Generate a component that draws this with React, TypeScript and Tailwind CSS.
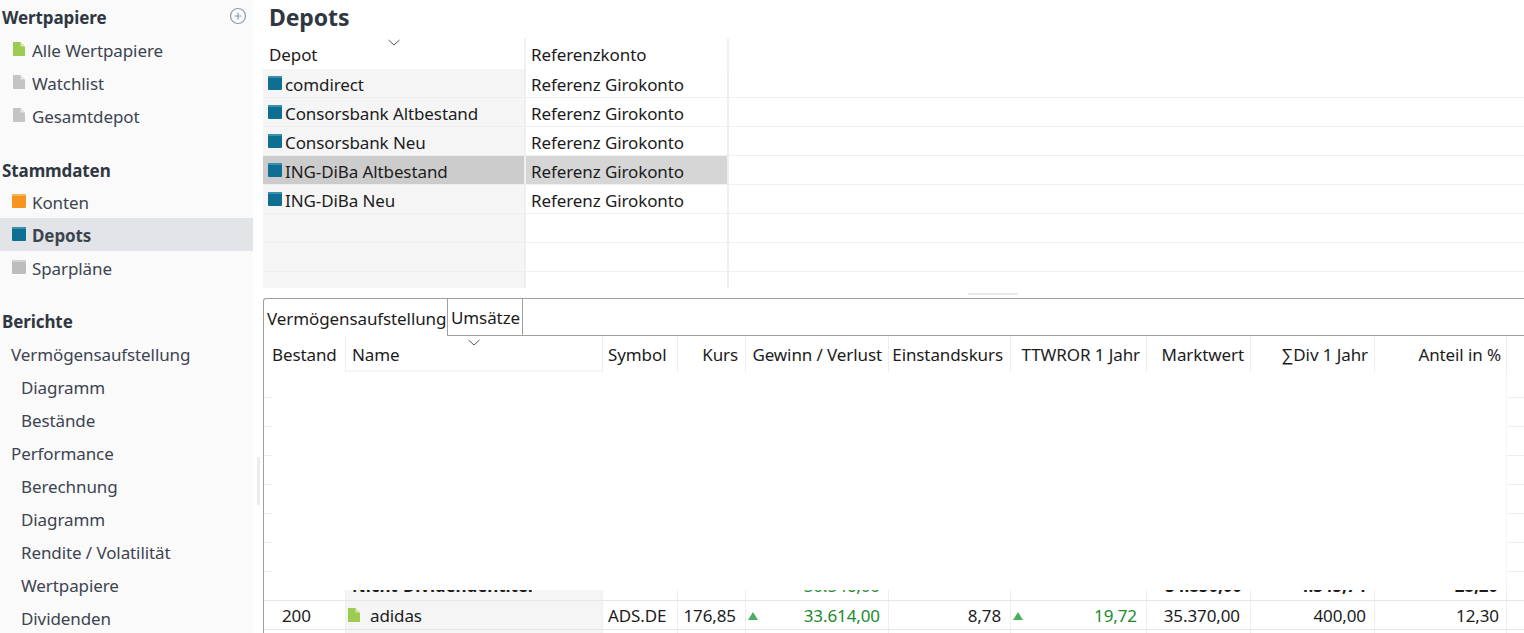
import React from 'react';
import { CirclePlus } from 'lucide-react';

const FONT = "font-['Noto_Sans',sans-serif] tracking-[-0.1px]";

function DocIcon({ color }: { color: string }) {
  return (
    <svg width="12" height="14" viewBox="0 0 12 14" className="shrink-0">
      <path d="M0 0H7.5L12 4.5V14H0Z" fill={color} />
      <path d="M7.5 0L12 4.5H7.5Z" fill="#ffffff" fillOpacity="0.55" />
    </svg>
  );
}

function BoxIcon({ color, light }: { color: string; light: string }) {
  return (
    <svg width="14" height="14" viewBox="0 0 14 14" className="shrink-0">
      <rect width="14" height="14" rx="1" fill={color} />
      <rect width="14" height="2" rx="1" fill={light} />
    </svg>
  );
}

function SortChevron() {
  return (
    <svg width="14" height="7" viewBox="0 0 14 7" fill="none" stroke="#555" strokeWidth="1">
      <path d="M1.5 1L7 6L12.5 1" />
    </svg>
  );
}

function Heading({ label, plus, flat }: { label: string; plus?: boolean; flat?: boolean }) {
  return (
    <div className={`flex h-[33px] items-center justify-between pl-[2px] pr-[6px] text-[17px] font-bold text-[#2f3742] ${flat ? 'pb-[2px]' : 'pt-[4px]'}`}>
      <span>{label}</span>
      {plus && <CirclePlus size={18} strokeWidth={1.6} className="mb-[3px] text-[#8f9ba6]" />}
    </div>
  );
}

type NavItemProps = { label: string; icon?: React.ReactNode; indent?: string; active?: boolean; flat?: boolean };

function NavItem({ label, icon, indent, active, flat }: NavItemProps) {
  return (
    <div
      className={`flex h-[33px] items-center text-[17px] text-[#3c4450] ${indent ?? 'pl-[12px]'} ${flat ? 'pb-[2px]' : 'pt-[4px]'} ${active ? 'bg-[#e3e4e8] font-bold text-[#2f3742]' : ''}`}
    >
      {icon && <span className={`flex ${flat ? 'w-[19px] pb-[3px]' : 'w-[20px] pb-[5px]'}`}>{icon}</span>}
      <span>{label}</span>
    </div>
  );
}

function Sidebar() {
  return (
    <aside className="flex w-[253px] shrink-0 flex-col bg-[#fafafa] pt-[2px]">
      <Heading label="Wertpapiere" plus flat />
      <NavItem label="Alle Wertpapiere" flat indent="pl-[13px]" icon={<DocIcon color="#9ccb4f" />} />
      <NavItem label="Watchlist" flat indent="pl-[13px]" icon={<DocIcon color="#c4c4c4" />} />
      <NavItem label="Gesamtdepot" flat indent="pl-[13px]" icon={<DocIcon color="#c4c4c4" />} />
      <div className="h-[18px]" />
      <Heading label="Stammdaten" />
      <NavItem label="Konten" icon={<BoxIcon color="#f7941d" light="#fbb45c" />} />
      <NavItem label="Depots" active icon={<BoxIcon color="#0e6f93" light="#3d8fae" />} />
      <NavItem label="Sparpläne" icon={<BoxIcon color="#bdbdbd" light="#d2d2d2" />} />
      <div className="h-[20px]" />
      <Heading label="Berichte" />
      <NavItem label="Vermögensaufstellung" indent="pl-[11px]" />
      <NavItem label="Diagramm" indent="pl-[21px]" />
      <NavItem label="Bestände" indent="pl-[21px]" />
      <NavItem label="Performance" indent="pl-[11px]" />
      <NavItem label="Berechnung" indent="pl-[21px]" />
      <NavItem label="Diagramm" indent="pl-[21px]" />
      <NavItem label="Rendite / Volatilität" indent="pl-[21px]" />
      <NavItem label="Wertpapiere" indent="pl-[21px]" />
      <NavItem label="Dividenden" indent="pl-[21px]" />
    </aside>
  );
}

const depots = [
  { name: 'comdirect', selected: false },
  { name: 'Consorsbank Altbestand', selected: false },
  { name: 'Consorsbank Neu', selected: false },
  { name: 'ING-DiBa Altbestand', selected: true },
  { name: 'ING-DiBa Neu', selected: false },
  { name: '', selected: false },
  { name: '', selected: false },
  { name: '', selected: false },
];

function DepotTable() {
  return (
    <div className="h-[250px] shrink-0 overflow-hidden text-[17px] text-[#1c1c1c]">
      <div className="flex h-[31px]">
        <div className="relative flex w-[263px] items-center border-r-2 border-[#f0f0f6] pl-[6px] pt-[3px]">
          Depot
          <span className="absolute left-[124px] top-[1px] flex">
            <SortChevron />
          </span>
        </div>
        <div className="flex w-[203px] items-center border-r-2 border-[#f0f0f6] pl-[5px] pt-[3px]">Referenzkonto</div>
      </div>
      {depots.map((d, i) => (
        <div key={i} className="flex h-[29px] border-b border-[#efeff2]">
          <div className={`flex w-[263px] items-center border-r-2 border-[#eeeef4] pl-[5px] ${d.selected ? 'bg-[#cccccc]' : 'bg-[#f5f5f5]'}`}>
            {d.name && (
              <>
                <span className="flex w-[17px] pb-[1px]">
                  <BoxIcon color="#0e6f93" light="#3d8fae" />
                </span>
                <span className="pt-[3px]">{d.name}</span>
              </>
            )}
          </div>
          <div className={`flex w-[203px] items-center border-r-2 border-[#eeeef4] pl-[5px] pt-[3px] ${d.selected ? 'bg-[#d6d6d6]' : ''}`}>
            {d.name && 'Referenz Girokonto'}
          </div>
        </div>
      ))}
    </div>
  );
}

const widths = ['w-[82px]', 'w-[257px]', 'w-[75px]', 'w-[68px]', 'w-[143px]', 'w-[122px]', 'w-[136px]', 'w-[104px]', 'w-[124px]', 'w-[132px]'];

const headers = [
  { label: 'Bestand', cls: 'pl-[8px]' },
  { label: 'Name', cls: 'pl-[6px]' },
  { label: 'Symbol', cls: 'pl-[5px]' },
  { label: 'Kurs', cls: 'justify-end pr-[7px]' },
  { label: 'Gewinn / Verlust', cls: 'justify-end pr-[6px]' },
  { label: 'Einstandskurs', cls: 'justify-end pr-[7px]' },
  { label: 'TTWROR 1 Jahr', cls: 'justify-end pr-[6px]' },
  { label: 'Marktwert', cls: 'justify-end pr-[6px]' },
  { label: '∑Div 1 Jahr', cls: 'justify-end pr-[6px]' },
  { label: 'Anteil in %', cls: 'justify-end pr-[5px]' },
];

function Triangle() {
  return (
    <svg width="10" height="8" viewBox="0 0 10 8" className="absolute left-[2px] top-[11px]">
      <path d="M5 0L10 8H0Z" fill="#4caf5f" />
    </svg>
  );
}

function Gutter() {
  return (
    <div className="flex h-[218px] flex-col overflow-hidden">
      <div className="h-[26px] shrink-0 border-b border-[#eeeeee]" />
      {[0, 1, 2, 3, 4, 5].map((i) => (
        <div key={i} className="h-[29px] shrink-0 border-b border-[#eeeeee]" />
      ))}
    </div>
  );
}

const cellLine = 'border-r border-[#eeeeee]';

function SummaryRow() {
  const values = ['', 'Nicht-Dividendentitel', '', '', '30.546,00', '', '', '34.850,00', '4.345,74', '28,20'];
  return (
    <div className="flex h-[11px] border-b border-[#e6e6e6] font-bold">
      {widths.map((w, i) => (
        <div key={i} className={`${w} overflow-hidden ${cellLine} ${i === 1 ? 'bg-[#f5f5f5] pl-[6px]' : 'pr-[8px] text-right'} ${i === 4 ? 'font-normal text-[#1a8a2e]' : ''}`}>
          <div className="-mt-[19px] leading-[29px]">{values[i]}</div>
        </div>
      ))}
    </div>
  );
}

function DataRow() {
  return (
    <div className="flex h-[29px] border-b border-[#e6e6e6]">
      <div className={`${widths[0]} ${cellLine} flex items-center pl-[18px] pt-[2px]`}>200</div>
      <div className={`${widths[1]} ${cellLine} flex items-center bg-[#f5f5f5] pl-[2px]`}>
        <span className="flex w-[22px]">
          <DocIcon color="#9ccb4f" />
        </span>
        <span className="pt-[2px]">adidas</span>
      </div>
      <div className={`${widths[2]} ${cellLine} flex items-center pl-[5px] pt-[2px]`}>ADS.DE</div>
      <div className={`${widths[3]} ${cellLine} flex items-center justify-end pr-[9px] pt-[2px]`}>176,85</div>
      <div className={`${widths[4]} ${cellLine} relative flex items-center justify-end pr-[8px] pt-[2px] text-[#1a8a2e]`}>
        <Triangle />
        33.614,00
      </div>
      <div className={`${widths[5]} ${cellLine} flex items-center justify-end pr-[9px] pt-[2px]`}>8,78</div>
      <div className={`${widths[6]} ${cellLine} relative flex items-center justify-end pr-[9px] pt-[2px] text-[#1a8a2e]`}>
        <Triangle />
        19,72
      </div>
      <div className={`${widths[7]} ${cellLine} flex items-center justify-end pr-[10px] pt-[2px]`}>35.370,00</div>
      <div className={`${widths[8]} ${cellLine} flex items-center justify-end pr-[8px] pt-[2px]`}>400,00</div>
      <div className={`${widths[9]} ${cellLine} flex items-center justify-end pr-[7px] pt-[2px]`}>12,30</div>
    </div>
  );
}

function HoldingsPanel() {
  return (
    <div className="flex min-h-0 flex-1 flex-col rounded-tl-[3px] border-l border-t border-[#a0a0a0] text-[17px] text-[#1c1c1c]">
      <div className="flex h-[37px] shrink-0">
        <div className="flex w-[183px] items-center pl-[3px] pt-[2px]">Vermögensaufstellung</div>
        <div className="flex w-[76px] items-center border-x border-b border-[#a0a0a0] pl-[3px] pt-[2px]">Umsätze</div>
        <div className="flex-1 border-b border-[#a0a0a0]" />
      </div>
      <div className="flex h-[36px] shrink-0">
        {headers.map((h, i) => (
          <div key={h.label} className={`${widths[i]} relative flex items-center ${h.cls} border-r border-[#eeeeee] ${i === 1 ? 'border-b-2 border-b-[#f5f5f5] pt-[4px]' : 'pt-[2px]'}`}>
            {h.label}
            {i === 1 && (
              <span className="absolute left-[121px] top-[3px] flex">
                <SortChevron />
              </span>
            )}
          </div>
        ))}
      </div>
      <div className="flex h-[218px] shrink-0">
        <div className="w-[8px] shrink-0">
          <Gutter />
        </div>
        <div className="w-[1235px] shrink-0 border-r border-[#f4f4f4]" />
        <div className="flex-1">
          <Gutter />
        </div>
      </div>
      <SummaryRow />
      <DataRow />
      <div className="flex h-[10px]">
        {widths.map((w, i) => (
          <div key={i} className={`${w} ${cellLine} ${i === 1 ? 'bg-[#f5f5f5]' : ''}`} />
        ))}
      </div>
    </div>
  );
}

export default function App() {
  return (
    <div className={`flex h-[633px] w-[1524px] overflow-hidden bg-white ${FONT}`}>
      <Sidebar />
      <div className="flex w-[10px] shrink-0 justify-center pt-[457px]">
        <div className="h-[48px] w-[3px] bg-[#ececec]" />
      </div>
      <main className="flex min-w-0 flex-1 flex-col">
        <h1 className="flex h-[38px] shrink-0 items-center pb-[4px] pl-[6px] text-[23px] font-bold text-[#2f3742]">Depots</h1>
        <DepotTable />
        <div className="flex h-[10px] shrink-0 items-center pl-[705px]">
          <div className="mt-[1px] h-[2px] w-[50px] bg-[#e8e8e8]" />
        </div>
        <HoldingsPanel />
      </main>
    </div>
  );
}
